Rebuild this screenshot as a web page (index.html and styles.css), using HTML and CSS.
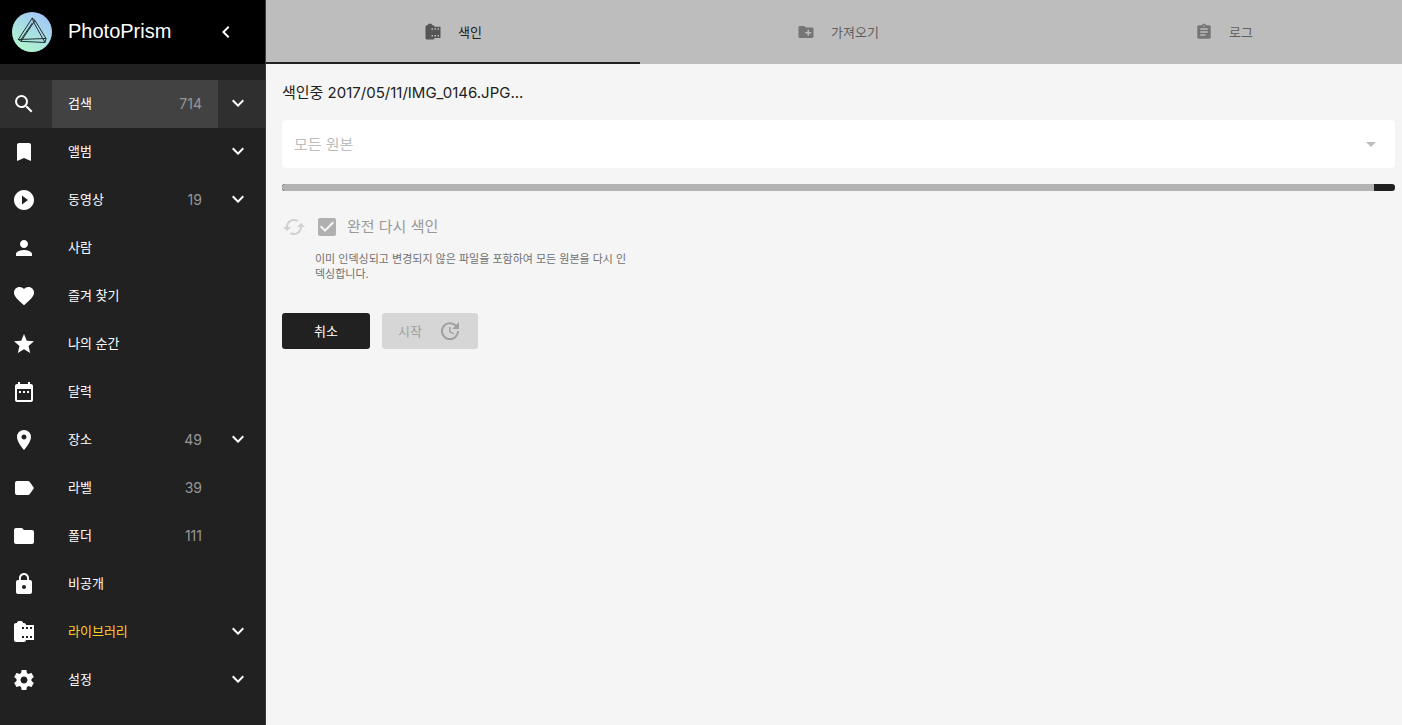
FILE: index.html
```html
<!DOCTYPE html>
<html lang="ko">
<head>
<meta charset="utf-8">
<meta name="viewport" content="width=device-width, initial-scale=1">
<title>PhotoPrism</title>
<link rel="stylesheet" href="styles.css">
</head>
<body>
<svg class="sprite" aria-hidden="true">
  <symbol id="search" viewBox="0 0 24 24"><path d="M15.5 14h-.79l-.28-.27A6.47 6.47 0 0 0 16 9.5 6.5 6.5 0 1 0 9.5 16c1.61 0 3.09-.59 4.23-1.57l.27.28v.79l5 4.99L20.49 19l-4.99-5zm-6 0C7.01 14 5 11.99 5 9.5S7.01 5 9.5 5 14 7.01 14 9.5 11.99 14 9.5 14z"/></symbol>
  <symbol id="bookmark" viewBox="0 0 24 24"><path d="M17 3H7c-1.1 0-1.99.9-1.99 2L5 21l7-3 7 3V5c0-1.1-.9-2-2-2z"/></symbol>
  <symbol id="play" viewBox="0 0 24 24"><path d="M12 2C6.48 2 2 6.48 2 12s4.48 10 10 10 10-4.48 10-10S17.52 2 12 2zm-2 14.5v-9l6 4.5-6 4.5z"/></symbol>
  <symbol id="person" viewBox="0 0 24 24"><path d="M12 12c2.21 0 4-1.79 4-4s-1.79-4-4-4-4 1.79-4 4 1.79 4 4 4zm0 2c-2.67 0-8 1.34-8 4v2h16v-2c0-2.66-5.33-4-8-4z"/></symbol>
  <symbol id="heart" viewBox="0 0 24 24"><path d="M12 21.35l-1.45-1.32C5.4 15.36 2 12.28 2 8.5 2 5.42 4.42 3 7.5 3c1.74 0 3.41.81 4.5 2.09C13.09 3.81 14.76 3 16.5 3 19.58 3 22 5.42 22 8.5c0 3.78-3.4 6.86-8.55 11.54L12 21.35z"/></symbol>
  <symbol id="star" viewBox="0 0 24 24"><path d="M12 17.27L18.18 21l-1.64-7.03L22 9.24l-7.19-.61L12 2 9.19 8.63 2 9.24l5.46 4.73L5.82 21z"/></symbol>
  <symbol id="calendar" viewBox="0 0 24 24"><path d="M9 11H7v2h2v-2zm4 0h-2v2h2v-2zm4 0h-2v2h2v-2zm2-7h-1V2h-2v2H8V2H6v2H5c-1.11 0-1.99.9-1.99 2L3 20c0 1.1.89 2 2 2h14c1.1 0 2-.9 2-2V6c0-1.1-.9-2-2-2zm0 16H5V9h14v11z"/></symbol>
  <symbol id="place" viewBox="0 0 24 24"><path d="M12 2C8.13 2 5 5.13 5 9c0 5.25 7 13 7 13s7-7.75 7-13c0-3.87-3.13-7-7-7zm0 9.5c-1.38 0-2.5-1.12-2.5-2.5s1.12-2.5 2.5-2.5 2.5 1.12 2.5 2.5-1.12 2.5-2.5 2.5z"/></symbol>
  <symbol id="label" viewBox="0 0 24 24"><path d="M17.63 5.84C17.27 5.33 16.67 5 16 5L5 5.01C3.9 5.01 3 5.9 3 7v10c0 1.1.9 1.99 2 1.99L16 19c.67 0 1.27-.33 1.63-.84L22 12l-4.37-6.16z"/></symbol>
  <symbol id="folder" viewBox="0 0 24 24"><path d="M10 4H4c-1.1 0-1.99.9-1.99 2L2 18c0 1.1.9 2 2 2h16c1.1 0 2-.9 2-2V8c0-1.1-.9-2-2-2h-8l-2-2z"/></symbol>
  <symbol id="lock" viewBox="0 0 24 24"><path d="M18 8h-1V6c0-2.76-2.24-5-5-5S7 3.24 7 6v2H6c-1.1 0-2 .9-2 2v10c0 1.1.9 2 2 2h12c1.1 0 2-.9 2-2V10c0-1.1-.9-2-2-2zm-6 9c-1.1 0-2-.9-2-2s.9-2 2-2 2 .9 2 2-.9 2-2 2zm3.1-9H8.9V6c0-1.71 1.39-3.1 3.1-3.1 1.71 0 3.1 1.39 3.1 3.1v2z"/></symbol>
  <symbol id="roll" viewBox="0 0 24 24"><path d="M14 5c0-1.1-.9-2-2-2h-1c0-1.1-.9-2-2-2H7c-1.1 0-2 .9-2 2H4c-1.1 0-2 .9-2 2v15c0 1.1.9 2 2 2h8c1.1 0 2-.9 2-2h8V5h-8zm-2 13h-2v-2h2v2zm0-9h-2V7h2v2zm4 9h-2v-2h2v2zm0-9h-2V7h2v2zm4 9h-2v-2h2v2zm0-9h-2V7h2v2z"/></symbol>
  <symbol id="gear" viewBox="0 0 24 24"><path d="M19.43 12.98c.04-.32.07-.64.07-.98s-.03-.66-.07-.98l2.11-1.65c.19-.15.24-.42.12-.64l-2-3.46c-.12-.22-.39-.3-.61-.22l-2.49 1c-.52-.4-1.08-.73-1.69-.98l-.38-2.65C14.46 2.18 14.25 2 14 2h-4c-.25 0-.46.18-.49.42l-.38 2.65c-.61.25-1.17.59-1.69.98l-2.49-1c-.23-.09-.49 0-.61.22l-2 3.46c-.13.22-.07.49.12.64l2.11 1.65c-.04.32-.07.65-.07.98s.03.66.07.98l-2.11 1.65c-.19.15-.24.42-.12.64l2 3.46c.12.22.39.3.61.22l2.49-1c.52.4 1.08.73 1.69.98l.38 2.65c.03.24.24.42.49.42h4c.25 0 .46-.18.49-.42l.38-2.65c.61-.25 1.17-.59 1.69-.98l2.49 1c.23.09.49 0 .61-.22l2-3.46c.12-.22.07-.49-.12-.64l-2.11-1.65zM12 15.5c-1.93 0-3.5-1.57-3.5-3.5s1.57-3.5 3.5-3.5 3.5 1.57 3.5 3.5-1.57 3.5-3.5 3.5z"/></symbol>
  <symbol id="down" viewBox="0 0 24 24"><path d="M16.59 8.59L12 13.17 7.41 8.59 6 10l6 6 6-6z"/></symbol>
  <symbol id="left" viewBox="0 0 24 24"><path d="M15.41 7.41L14 6l-6 6 6 6 1.41-1.41L10.83 12z"/></symbol>
  <symbol id="caret" viewBox="0 0 24 24"><path d="M7 10l5 5 5-5z"/></symbol>
  <symbol id="newfolder" viewBox="0 0 24 24"><path d="M20 6h-8l-2-2H4c-1.11 0-1.99.89-1.99 2L2 18c0 1.11.89 2 2 2h16c1.11 0 2-.89 2-2V8c0-1.11-.89-2-2-2zm-1 8h-3v3h-2v-3h-3v-2h3V9h2v3h3v2z"/></symbol>
  <symbol id="log" viewBox="0 0 24 24"><path d="M19 3h-4.18C14.4 1.84 13.3 1 12 1c-1.3 0-2.4.84-2.82 2H5c-1.1 0-2 .9-2 2v14c0 1.1.9 2 2 2h14c1.1 0 2-.9 2-2V5c0-1.1-.9-2-2-2zm-7 0c.55 0 1 .45 1 1s-.45 1-1 1-1-.45-1-1 .45-1 1-1zm2 14H7v-2h7v2zm3-4H7v-2h10v2zm0-4H7V7h10v2z"/></symbol>
  <symbol id="cached" viewBox="0 0 24 24"><path d="M19 8l-4 4h3c0 3.31-2.69 6-6 6-1.01 0-1.97-.25-2.8-.7l-1.46 1.46C8.97 19.54 10.43 20 12 20c4.42 0 8-3.58 8-8h3l-4-4zM6 12c0-3.31 2.69-6 6-6 1.01 0 1.97.25 2.8.7l1.46-1.46C15.03 4.46 13.57 4 12 4c-4.42 0-8 3.58-8 8H1l4 4 4-4H6z"/></symbol>
  <symbol id="update" viewBox="0 0 24 24"><path d="M21 10.12h-6.78l2.74-2.82c-2.73-2.7-7.15-2.8-9.88-.1-2.73 2.71-2.73 7.08 0 9.79 2.73 2.71 7.15 2.71 9.88 0C18.32 15.65 19 14.08 19 12.1h2c0 1.98-.88 4.55-2.64 6.29-3.51 3.48-9.21 3.48-12.72 0-3.5-3.47-3.53-9.11-.02-12.58 3.51-3.47 9.14-3.47 12.65 0L21 3v7.12zM12.5 8v4.25l3.5 2.08-.72 1.21L11 13V8h1.5z"/></symbol>
</svg>
<div class="app">
  <aside class="sidebar">
    <header class="brand">
      <svg class="logo" viewBox="0 0 40 40" aria-hidden="true">
        <defs><linearGradient id="sky" x1="0.2" y1="1" x2="0.8" y2="0"><stop offset="0" stop-color="#b2f8c8"/><stop offset="0.5" stop-color="#a8dfe4"/><stop offset="1" stop-color="#a4c2fb"/></linearGradient></defs>
        <circle cx="20" cy="20" r="20" fill="url(#sky)"/>
        <g fill="none" stroke="#202c30" stroke-width="1" stroke-linejoin="round"><path d="M20.3 6L6.300 27.500L9 29.300L33 30.500L34 26.500L23 8.500zM23 8.500L9 29.300M20.300 6L21.500 10L33 30.500M6.300 27.500L34 26.500M20.300 11L9 27.500"/></g>
      </svg>
      <span class="brand-name">PhotoPrism</span>
      <button class="icon-button" type="button" aria-label="메뉴 접기"><svg class="icon"><use href="#left"/></svg></button>
    </header>
    <nav class="menu">
      <div class="row active"><svg class="icon lead"><use href="#search"/></svg><a class="link" href="#browse">검색<span class="count">714</span></a><button class="toggle" type="button" aria-label="검색 펼치기"><svg class="icon"><use href="#down"/></svg></button></div>
      <div class="row"><svg class="icon lead"><use href="#bookmark"/></svg><a class="link" href="#albums">앨범</a><button class="toggle" type="button" aria-label="앨범 펼치기"><svg class="icon"><use href="#down"/></svg></button></div>
      <div class="row"><svg class="icon lead"><use href="#play"/></svg><a class="link" href="#videos">동영상<span class="count">19</span></a><button class="toggle" type="button" aria-label="동영상 펼치기"><svg class="icon"><use href="#down"/></svg></button></div>
      <div class="row"><svg class="icon lead"><use href="#person"/></svg><a class="link" href="#people">사람</a></div>
      <div class="row"><svg class="icon lead"><use href="#heart"/></svg><a class="link" href="#favorites">즐겨 찾기</a></div>
      <div class="row"><svg class="icon lead"><use href="#star"/></svg><a class="link" href="#moments">나의 순간</a></div>
      <div class="row"><svg class="icon lead"><use href="#calendar"/></svg><a class="link" href="#calendar-page">달력</a></div>
      <div class="row"><svg class="icon lead"><use href="#place"/></svg><a class="link" href="#places">장소<span class="count">49</span></a><button class="toggle" type="button" aria-label="장소 펼치기"><svg class="icon"><use href="#down"/></svg></button></div>
      <div class="row"><svg class="icon lead"><use href="#label"/></svg><a class="link" href="#labels">라벨<span class="count">39</span></a></div>
      <div class="row"><svg class="icon lead"><use href="#folder"/></svg><a class="link" href="#folders">폴더<span class="count">111</span></a></div>
      <div class="row"><svg class="icon lead"><use href="#lock"/></svg><a class="link" href="#private">비공개</a></div>
      <div class="row"><svg class="icon lead"><use href="#roll"/></svg><a class="link current" href="#library">라이브러리</a><button class="toggle" type="button" aria-label="라이브러리 펼치기"><svg class="icon"><use href="#down"/></svg></button></div>
      <div class="row"><svg class="icon lead"><use href="#gear"/></svg><a class="link" href="#settings">설정</a><button class="toggle" type="button" aria-label="설정 펼치기"><svg class="icon"><use href="#down"/></svg></button></div>
    </nav>
  </aside>
  <main class="main">
    <div class="tabs" role="tablist">
      <button class="tab selected" type="button" role="tab" aria-selected="true"><svg class="tab-icon"><use href="#roll"/></svg>색인</button>
      <button class="tab" type="button" role="tab" aria-selected="false"><svg class="tab-icon"><use href="#newfolder"/></svg>가져오기</button>
      <button class="tab last" type="button" role="tab" aria-selected="false"><svg class="tab-icon"><use href="#log"/></svg>로그</button>
    </div>
    <form class="panel">
      <p class="status" id="status">색인중 2017/05/11/IMG_0146.JPG...</p>
      <div class="select-box">
        <select class="select" aria-label="원본 폴더" disabled><option>모든 원본</option></select>
        <svg class="icon caret"><use href="#caret"/></svg>
      </div>
      <div class="progress" role="progressbar" aria-labelledby="status"><div class="progress-fill"></div></div>
      <div class="option">
        <svg class="icon option-icon"><use href="#cached"/></svg>
        <input class="check" id="rescan" type="checkbox" aria-describedby="hint" checked disabled>
        <label class="option-label" for="rescan">완전 다시 색인</label>
      </div>
      <p class="hint" id="hint">이미 인덱싱되고 변경되지 않은 파일을 포함하여 모든 원본을 다시 인덱싱합니다.</p>
      <div class="actions">
        <button class="button cancel" type="button">취소</button>
        <button class="button start" type="button" disabled>시작<svg class="icon"><use href="#update"/></svg></button>
      </div>
    </form>
  </main>
</div>
</body>
</html>
```

FILE: styles.css
```css
*, *::before, *::after { box-sizing: border-box; }

body {
  margin: 0;
  background: #f5f5f5;
  color: #212121;
  font: 13px/20px Inter, "Noto Sans CJK KR", sans-serif;
}

button, select {
  border: 0;
  padding: 0;
  background: none;
  color: inherit;
  font: inherit;
}

p { margin: 0; }

.sprite { position: absolute; width: 0; height: 0; }

.icon {
  display: block;
  flex: none;
  width: 24px;
  height: 24px;
  fill: currentColor;
}

.app {
  display: grid;
  grid-template-columns: 266px minmax(0, 1fr);
  min-height: 100vh;
}

/* Sidebar */
.sidebar {
  border-right: 1px solid #3b3b3b;
  background: #212121;
  color: #fff;
}

.brand {
  display: flex;
  align-items: center;
  height: 64px;
  padding: 0 27px 0 12px;
  background: #000;
}

.logo { width: 40px; height: 40px; margin-right: 16px; }

.brand-name {
  flex: 1;
  padding-bottom: 2px;
  font: 20px/24px "Liberation Sans", sans-serif;
}

.menu { padding: 16px 0; }

.row {
  display: grid;
  grid-template-columns: 52px minmax(0, 1fr) 47px;
  align-items: center;
  height: 48px;
}

.row.active { background: #2f2f2f; }
.row.active .link { background: #424242; }

.lead { margin-left: 12px; }

.link {
  display: flex;
  align-items: center;
  justify-content: space-between;
  height: 48px;
  padding: 0 16px 2px;
  color: #fff;
  text-decoration: none;
}

.link.current { color: #ffca28; }

.count { padding-top: 2px; color: #979797; font-size: 14px; }

.toggle { padding: 0 0 2px 8px; }

/* Library tabs */
.tabs {
  display: grid;
  grid-template-columns: 374fr 396fr 366fr;
  height: 64px;
  background: #bdbdbd;
}

.tab {
  display: flex;
  align-items: center;
  justify-content: center;
  gap: 16px;
  border-bottom: 2px solid transparent;
  padding-top: 2px;
  color: #5f5f5f;
}

.tab.selected { border-color: #212121; color: #212121; }
.tab.last { padding-left: 10px; }

.tab-icon { width: 18px; height: 18px; fill: #757575; }
.selected .tab-icon { fill: #555; }

/* Index form */
.panel { padding: 16px 7px 16px 16px; }

.status { padding-top: 1px; font-size: 15px; line-height: 24px; }

.select-box {
  display: grid;
  align-items: center;
  margin: 15px 0 16px;
  border-radius: 4px;
  background: #fff;
}

.select {
  grid-area: 1 / 1;
  width: 100%;
  height: 48px;
  padding: 1px 12px 0;
  appearance: none;
  color: #bdbdbd;
  font-size: 15px;
  opacity: 1;
}

.caret {
  grid-area: 1 / 1;
  justify-self: end;
  margin-right: 12px;
  fill: #bdbdbd;
  pointer-events: none;
}

.progress {
  overflow: hidden;
  height: 7px;
  border-radius: 3px;
  background: #212121;
}

.progress-fill {
  width: calc(100% - 21px);
  height: 7px;
  border-radius: 3px 0 0 3px;
  background: #b3b3b3;
}

.option {
  display: flex;
  align-items: center;
  height: 24px;
  margin-top: 24px;
}

.option-icon { margin-right: 12px; fill: #d0d0d0; }

.check {
  width: 18px;
  height: 18px;
  margin: 0 11px 0 0;
  appearance: none;
  border-radius: 2px;
  background: #b0b0b0 url("data:image/svg+xml,%3Csvg xmlns='http://www.w3.org/2000/svg' viewBox='3 3 18 18'%3E%3Cpath fill='%23f5f5f5' d='M10 17l-5-5 1.41-1.41L10 14.17l7.59-7.59L19 8z'/%3E%3C/svg%3E");
}

.option-label { color: #999; font-size: 15px; line-height: 24px; }

.hint {
  max-width: 352px;
  margin-top: 13px;
  padding-left: 33px;
  color: #707070;
  font-size: 11px;
  line-height: 15px;
}

.actions { display: flex; gap: 12px; margin-top: 31px; }

.button {
  display: flex;
  align-items: center;
  justify-content: center;
  height: 36px;
  border-radius: 3px;
}

.cancel { width: 88px; background: #212121; color: #fff; }

.start {
  gap: 16px;
  padding: 0 16px;
  background: #d6d6d6;
  color: #a0a0a0;
}
```
